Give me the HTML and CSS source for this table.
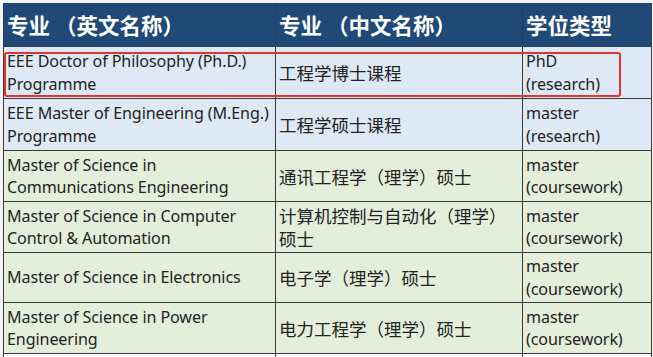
FILE: index.html
```html
<!DOCTYPE html>
<html lang="zh-CN">
<head>
<meta charset="utf-8">
<title>专业列表</title>
<link rel="stylesheet" href="styles.css">
</head>
<body>
<div class="wrap">
<table class="majors">
  <colgroup>
    <col class="c1"><col class="c2"><col class="c3">
  </colgroup>
  <thead>
    <tr class="head">
      <th>专业&nbsp;（英文名称）</th>
      <th>专业&nbsp;（中文名称）</th>
      <th>学位类型</th>
    </tr>
  </thead>
  <tbody>
    <tr class="blue r1">
      <td class="en">EEE Doctor of Philosophy (Ph.D.)<br>Programme</td>
      <td class="zh">工程学博士课程</td>
      <td class="en">PhD<br>(research)</td>
    </tr>
    <tr class="blue r2">
      <td class="en">EEE Master of Engineering (M.Eng.)<br>Programme</td>
      <td class="zh">工程学硕士课程</td>
      <td class="en">master<br>(research)</td>
    </tr>
    <tr class="green r3">
      <td class="en">Master of Science in<br>Communications Engineering</td>
      <td class="zh">通讯工程学（理学）硕士</td>
      <td class="en">master<br>(coursework)</td>
    </tr>
    <tr class="green r4">
      <td class="en">Master of Science in Computer<br>Control &amp; Automation</td>
      <td class="zh">计算机控制与自动化（理学）<br>硕士</td>
      <td class="en">master<br>(coursework)</td>
    </tr>
    <tr class="green r5">
      <td class="en">Master of Science in Electronics</td>
      <td class="zh">电子学（理学）硕士</td>
      <td class="en">master<br>(coursework)</td>
    </tr>
    <tr class="green r6">
      <td class="en">Master of Science in Power<br>Engineering</td>
      <td class="zh">电力工程学（理学）硕士</td>
      <td class="en">master<br>(coursework)</td>
    </tr>
    <tr class="tail">
      <td></td><td></td><td></td>
    </tr>
  </tbody>
</table>
<div class="highlight"></div>
</div>
</body>
</html>
```
FILE: styles.css
```css
html, body {
  margin: 0;
  padding: 0;
  background: #f3f3f3;
}
.wrap {
  position: relative;
  padding: 3px 0 0 3px;
  width: 653px;
  height: 357px;
  box-sizing: border-box;
  overflow: hidden;
}
.majors {
  border-collapse: collapse;
  table-layout: fixed;
  width: 648px;
  font-family: "Noto Sans", "Noto Sans CJK SC", sans-serif;
  color: #232323;
}
.c1 { width: 272px; }
.c2 { width: 247px; }
.c3 { width: 129px; }
.majors th, .majors td {
  border: 1px solid #3a3a3a;
  padding: 0 3px;
  text-align: left;
  vertical-align: middle;
  white-space: nowrap;
}
.head th {
  height: 42px;
  background: #1f4a78;
  color: #ffffff;
  font-family: "Noto Sans CJK SC", sans-serif;
  font-weight: 700;
  font-size: 21.5px;
  line-height: 26px;
  border-color: #2a3d55;
  border-top-color: #1f4a78;
}
.blue td { background: #dde9f5; }
.green td { background: #e3eedb; }
.en {
  font-size: 16.1px;
  line-height: 22.5px;
  letter-spacing: -0.1px;
}
.zh {
  font-family: "Noto Sans CJK SC", sans-serif;
  font-size: 17.5px;
  line-height: 23px;
}
.r1 td { height: 51px; }
.r2 td { height: 51px; }
.r3 td { height: 50px; }
.r4 td { height: 50px; }
.r5 td { height: 49px; }
.r6 td { height: 50px; }
.tail td {
  height: 20px;
  background: #ffffff;
}
.highlight {
  position: absolute;
  left: 4px;
  top: 52px;
  width: 613px;
  height: 41px;
  border: 2px solid #e5322d;
  border-radius: 3px;
  pointer-events: none;
}
```
